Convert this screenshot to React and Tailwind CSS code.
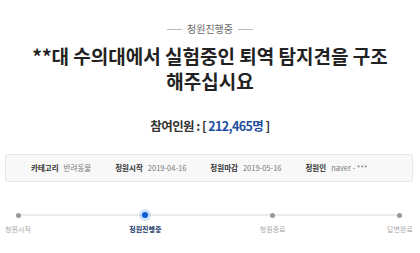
import React from 'react';

const steps = [
  { label: '청원시작', active: false },
  { label: '청원진행중', active: true },
  { label: '청원종료', active: false },
  { label: '답변완료', active: false },
];

function InfoItem({ label, value }) {
  return (
    <li className="flex items-center gap-[5px]">
      <span className="font-bold text-[#333]">{label}</span>
      <span className="text-[#777]">{value}</span>
    </li>
  );
}

export default function App() {
  return (
    <div
      className="w-[420px] h-[253px] bg-white overflow-hidden"
      style={{ fontFamily: '"Noto Sans CJK KR", "Noto Sans", sans-serif' }}
    >
      <div className="pt-[21px] flex items-center justify-center gap-[5px]">
        <span className="w-[15px] h-px bg-[#bbb]"></span>
        <span className="text-[10px] leading-[16px] text-[#666]">청원진행중</span>
        <span className="w-[15px] h-px bg-[#bbb]"></span>
      </div>

      <h1 className="mt-[6px] px-[10px] text-center text-[19px] leading-[25px] font-bold text-[#222]">
        **대 수의대에서 실험중인 퇴역 탐지견을 구조
        <br />
        해주십시요
      </h1>

      <p className="mt-[24px] text-center text-[12.5px] leading-[18px] font-bold text-[#333] tracking-[-0.6px]">
        참여인원 : [ <span className="text-[#1f4ea1]">212,465명</span> ]
      </p>

      <div className="mt-[19px] mx-[5px] mr-[7px] h-[28px] bg-[#f8f8f8] border border-[#e6e6e6] rounded-[3px] flex items-center pl-[25px]">
        <ul className="flex items-center gap-[24px] text-[7.5px] leading-[10px]">
          <InfoItem label="카테고리" value="반려동물" />
          <InfoItem label="청원시작" value="2019-04-16" />
          <InfoItem label="청원마감" value="2019-05-16" />
          <InfoItem label="청원인" value="naver - ***" />
        </ul>
      </div>

      <div className="relative mt-[28px] mr-[2px]">
        <div className="absolute left-[18px] right-[18px] top-[4px] h-[2px] bg-[#ececec]"></div>
        <ol className="relative flex justify-between">
          {steps.map((s) => (
            <li key={s.label} className="w-[36px] flex flex-col items-center">
              <div className="h-[10px] flex items-center justify-center">
                {s.active ? (
                  <span className="w-[6px] h-[6px] rounded-full bg-[#0b5ed7] shadow-[0_0_0_3px_rgba(11,94,215,0.18)]"></span>
                ) : (
                  <span className="w-[5px] h-[5px] rounded-full bg-[#999]"></span>
                )}
              </div>
              <span
                className={
                  s.active
                    ? 'mt-[4px] whitespace-nowrap text-[7px] leading-[10px] font-bold text-[#1e3a6b]'
                    : 'mt-[4px] whitespace-nowrap text-[7px] leading-[10px] text-[#aaa]'
                }
              >
                {s.label}
              </span>
            </li>
          ))}
        </ol>
      </div>
    </div>
  );
}
